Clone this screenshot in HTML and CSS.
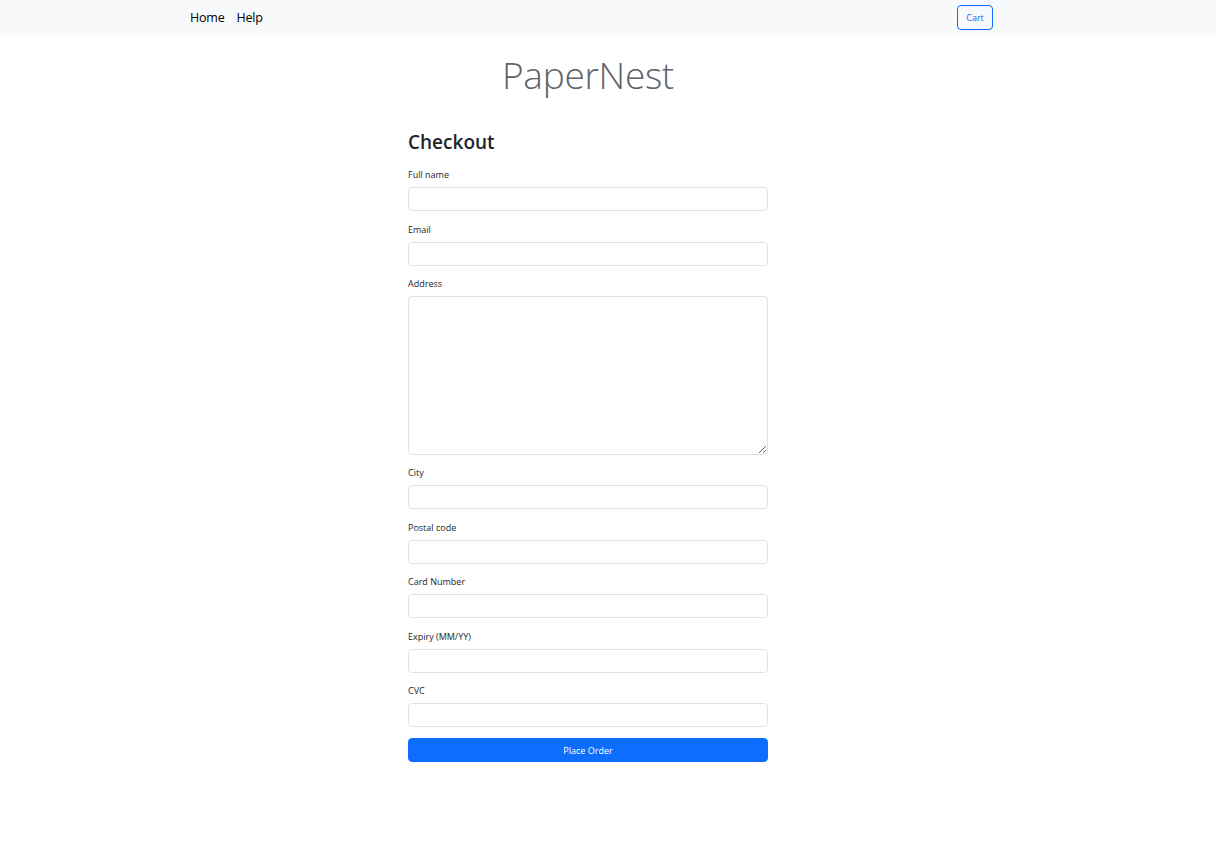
FILE: index.html
```html
<!DOCTYPE html>
<html lang="en">
<head>
<meta charset="utf-8">
<title>PaperNest - Checkout</title>
<link rel="stylesheet" href="styles.css">
</head>
<body>
<nav class="navbar">
  <div class="nav-inner">
    <div class="nav-links">
      <a class="nav-link" href="#">Home</a>
      <a class="nav-link" href="#">Help</a>
    </div>
    <button class="btn-cart" type="button">Cart</button>
  </div>
</nav>
<main class="page">
  <h1 class="brand">PaperNest</h1>
  <form class="checkout">
    <h2 class="title">Checkout</h2>
    <div class="group">
      <label class="label" for="name">Full name</label>
      <input class="control" id="name" type="text">
    </div>
    <div class="group">
      <label class="label" for="email">Email</label>
      <input class="control" id="email" type="email">
    </div>
    <div class="group">
      <label class="label" for="address">Address</label>
      <textarea class="control area" id="address"></textarea>
    </div>
    <div class="group">
      <label class="label" for="city">City</label>
      <input class="control" id="city" type="text">
    </div>
    <div class="group">
      <label class="label" for="postal">Postal code</label>
      <input class="control" id="postal" type="text">
    </div>
    <div class="group">
      <label class="label" for="card">Card Number</label>
      <input class="control" id="card" type="text">
    </div>
    <div class="group">
      <label class="label" for="expiry">Expiry (MM/YY)</label>
      <input class="control" id="expiry" type="text">
    </div>
    <div class="group">
      <label class="label" for="cvc">CVC</label>
      <input class="control" id="cvc" type="text">
    </div>
    <button class="btn-primary" type="button">Place Order</button>
  </form>
</main>
</body>
</html>
```
FILE: styles.css
```css
* { box-sizing: border-box; }
html, body { margin: 0; padding: 0; }
body {
  font-family: "Open Sans", "Noto Sans", "Liberation Sans", sans-serif;
  color: #212529;
  background: #fff;
}
.navbar {
  background: #f8f9fa;
  height: 35px;
}
.nav-inner {
  display: flex;
  align-items: center;
  justify-content: space-between;
  height: 35px;
  margin-left: 190px;
  width: 803px;
}
.nav-links {
  display: flex;
  gap: 12px;
}
.nav-link {
  font-size: 12.5px;
  color: #000;
  text-decoration: none;
  letter-spacing: -0.2px;
  line-height: 34px;
}
.btn-cart {
  font-family: inherit;
  font-size: 9px;
  color: #0d6efd;
  background: transparent;
  border: 1px solid #0d6efd;
  border-radius: 4px;
  width: 36px;
  height: 25px;
  padding: 0;
  margin-top: 0;
}
.page {
  width: 360px;
  margin-left: 408px;
}
.brand {
  font-weight: 300;
  font-size: 37px;
  color: #5c636a;
  text-align: center;
  margin: 0;
  padding-top: 15px;
  line-height: 50px;
  letter-spacing: -0.3px;
}
.checkout {
  display: flex;
  flex-direction: column;
  padding-top: 30px;
}
.title {
  font-size: 19px;
  font-weight: 600;
  margin: 0 0 13px;
  line-height: 24px;
  color: #212529;
}
.group {
  display: flex;
  flex-direction: column;
  margin-bottom: 10.5px;
}
.label {
  font-size: 9px;
  line-height: 15px;
  margin-bottom: 5px;
  color: #212529;
}
.control {
  display: block;
  width: 100%;
  height: 24px;
  border: 1px solid #dee2e6;
  border-radius: 4px;
  background: #fff;
  font-family: inherit;
  font-size: 10px;
  padding: 2px 6px;
}
.area {
  height: 158.5px;
  resize: vertical;
}
.btn-primary {
  font-family: inherit;
  font-size: 9px;
  font-weight: 500;
  color: #fff;
  background: #0d6efd;
  border: 1px solid #0d6efd;
  border-radius: 4px;
  height: 24px;
  width: 100%;
  margin-top: 0.5px;
}
```
